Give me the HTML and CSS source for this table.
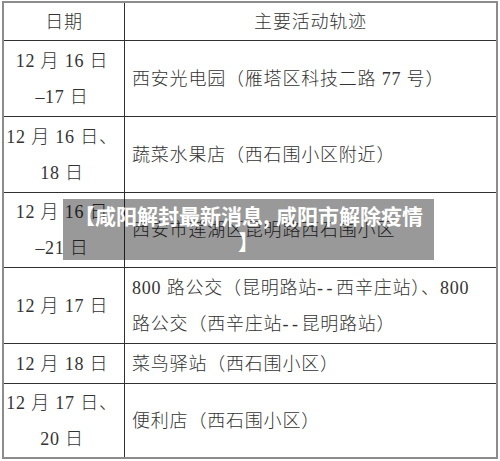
FILE: index.html
```html
<!DOCTYPE html>
<html lang="zh-CN">
<head>
<meta charset="utf-8">
<title>活动轨迹</title>
<link rel="stylesheet" href="styles.css">
</head>
<body>
<div class="sheet">
  <div class="grid">
    <div class="cell date head"><div class="txt">日期</div></div>
    <div class="cell place head"><div class="txt">主要活动轨迹</div></div>

    <div class="cell date"><div class="txt">12 月 16 日<br><span class="minus">–</span>17 日</div></div>
    <div class="cell place"><div class="txt">西安光电园（雁塔区科技二路 77 号）</div></div>

    <div class="cell date"><div class="txt">12 月 16 日、<br>18 日</div></div>
    <div class="cell place"><div class="txt">蔬菜水果店（西石围小区附近）</div></div>

    <div class="cell date"><div class="txt">12 月 16 日<br><span class="minus">–</span>21 日</div></div>
    <div class="cell place"><div class="txt">西安市莲湖区昆明路西石围小区</div></div>

    <div class="cell date"><div class="txt">12 月 17 日</div></div>
    <div class="cell place"><div class="txt">800 路公交（昆明路站<span class="dash">--</span>西辛庄站）、800 路公交（西辛庄站<span class="dash">--</span>昆明路站）</div></div>

    <div class="cell date"><div class="txt">12 月 18 日</div></div>
    <div class="cell place"><div class="txt">菜鸟驿站（西石围小区）</div></div>

    <div class="cell date"><div class="txt">12 月 17 日、<br>20 日</div></div>
    <div class="cell place"><div class="txt">便利店（西石围小区）</div></div>
  </div>
  <div class="banner">【咸阳解封最新消息<span class="comma">,</span>咸阳市解除疫情<br>】</div>
</div>
</body>
</html>
```

FILE: styles.css
```css
html, body {
  margin: 0;
  padding: 0;
  background: #ffffff;
}

.sheet {
  position: relative;
  margin: 1px 0 0 2px;
  width: 496px;
}

.grid {
  display: grid;
  grid-template-columns: 120px 371px;
  grid-template-rows: 37px 75px 75px 74px 75px 39px 73px;
  gap: 1px;
  background: #303030;
  border: 2px solid #8c8c8c;
}

.cell {
  background: #ffffff;
  display: flex;
  align-items: center;
  font-family: "Liberation Serif", "Noto Sans CJK SC", serif;
  font-size: 18px;
  font-weight: 300;
  line-height: 36px;
  letter-spacing: 0.8px;
  color: #333333;
}

.txt {
  flex: 1 1 auto;
  min-width: 0;
}

.date {
  text-align: center;
  padding-right: 4px;
}

.date.head {
  padding-right: 0;
}

.place {
  padding: 0 8px 0 7px;
}

.place.head {
  text-align: center;
  padding: 0;
}

.minus {
  letter-spacing: 0.5px;
}

.dash {
  letter-spacing: 3.5px;
}

.banner {
  position: absolute;
  left: 61px;
  top: 198px;
  width: 371px;
  height: 61px;
  box-sizing: border-box;
  padding-top: 3px;
  background: rgba(0, 0, 0, 0.4);
  color: #ffffff;
  font-family: "Noto Sans CJK SC", sans-serif;
  font-weight: 700;
  font-size: 21px;
  line-height: 26px;
  text-align: center;
}

.comma {
  padding-right: 6px;
}
```
